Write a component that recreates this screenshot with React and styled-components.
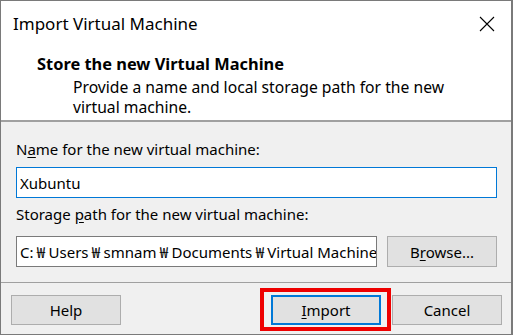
import React from "react";
import styled, { createGlobalStyle } from "styled-components";

const Global = createGlobalStyle`
  html, body { margin: 0; padding: 0; background: #3a3a3a; }
  * { box-sizing: border-box; }
  body { font-family: "Noto Sans", "Open Sans", sans-serif; }
`;

const Window = styled.div`
  width: 513px;
  height: 335px;
  border: 1px solid #7a7a7a;
  border-right-width: 2px;
  background: #f0f0f0;
  display: flex;
  flex-direction: column;
  overflow: hidden;
  color: #000;
`;

const TitleBar = styled.div`
  height: 44px;
  flex: none;
  background: #fff;
  display: flex;
  align-items: center;
  justify-content: space-between;
  padding-left: 12px;
  padding-right: 16px;
`;

const Title = styled.div`
  font-size: 17px;
`;

const CloseIcon = styled.svg`
  width: 16px;
  height: 16px;
  display: block;
  margin-top: 1px;
`;

const Banner = styled.div`
  background: #fff;
  height: 77px;
  flex: none;
  padding: 8px 0 0 36px;
  border-bottom: 2px solid #a0a0a0;
`;

const BannerTitle = styled.div`
  font-weight: 700;
  font-size: 16.4px;
  line-height: 22px;
  margin-bottom: 2px;
`;

const BannerText = styled.div`
  padding-left: 36px;
  font-size: 15.7px;
  line-height: 20px;
  width: 416px;
`;

const Body = styled.div`
  padding: 17px 14px 0 15px;
  display: flex;
  flex-direction: column;
  border-bottom: 1px solid #a0a0a0;
  height: 161px;
  flex: none;
`;

const Label = styled.div`
  font-size: 15px;
  line-height: 20px;
  margin-bottom: ${(p) => p.$mb ?? 8}px;
`;

const U = styled.span`
  text-decoration: underline;
  text-underline-offset: 2px;
`;

const TextInput = styled.input`
  font-family: inherit;
  font-size: 15px;
  height: 31px;
  width: 100%;
  border: 1px solid #0078d7;
  background: #fff;
  padding: 0 3px;
  margin: 0;
  outline: none;
  color: #000;
  flex: none;
`;

const PathField = styled.div`
  flex: 1;
  min-width: 0;
  height: 31px;
  border: 1px solid #7a7a7a;
  background: #fff;
  padding: 0 3px;
  font-size: 15px;
  line-height: 29px;
  white-space: nowrap;
  overflow: hidden;
`;

const Won = styled.span`
  display: inline-block;
  width: 15px;
  text-align: center;
  font-family: "Noto Sans CJK KR", "Noto Sans", sans-serif;
`;

const Row = styled.div`
  display: flex;
  gap: 10px;
  margin-top: 12px;
  align-items: stretch;
`;

const Spacer = styled.div`
  height: ${(p) => p.$h}px;
  flex: none;
`;

const Button = styled.button`
  font-family: inherit;
  font-size: 15px;
  width: 110px;
  height: ${(p) => p.$h || 30}px;
  background: #e1e1e1;
  border: ${(p) => (p.$default ? "2px solid #0078d7" : "1px solid #adadad")};
  color: #000;
  padding: 0;
  margin: 0;
  flex: none;
`;

const Footer = styled.div`
  flex: 1;
  display: flex;
  align-items: flex-start;
  padding: 12px 9px 0 10px;
`;

const Grow = styled.div`
  flex: 1;
`;

const Highlight = styled.div`
  position: relative;
  margin-right: 11px;
  display: flex;
  &::after {
    content: "";
    position: absolute;
    top: -7px;
    bottom: -6px;
    left: -11px;
    right: -10px;
    border: 4px solid #ee0000;
    pointer-events: none;
  }
`;

const path = ["C:", "Users", "smnam", "Documents", "Virtual Machines", "Xubuntu"];

export default function App() {
  return (
    <>
      <Global />
      <Window>
        <TitleBar>
          <Title>Import Virtual Machine</Title>
          <CloseIcon viewBox="0 0 16 16">
            <path d="M1 1 L15 15 M15 1 L1 15" stroke="#000" strokeWidth="1.1" fill="none" />
          </CloseIcon>
        </TitleBar>
        <Banner>
          <BannerTitle>Store the new Virtual Machine</BannerTitle>
          <BannerText>
            Provide a name and local storage path for the new virtual machine.
          </BannerText>
        </Banner>
        <Body>
          <Label>
            N<U>a</U>me for the new virtual machine:
          </Label>
          <TextInput defaultValue="Xubuntu" />
          <Spacer $h={6} />
          <Label $mb={0}>
            Storage <U>p</U>ath for the new virtual machine:
          </Label>
          <Row>
            <PathField>
              {path.map((seg, i) => (
                <React.Fragment key={i}>
                  {i > 0 && <Won>₩</Won>}
                  {seg}
                </React.Fragment>
              ))}
            </PathField>
            <Button $h={31}>
              B<U>r</U>owse...
            </Button>
          </Row>
        </Body>
        <Footer>
          <Button>Help</Button>
          <Grow />
          <Highlight>
            <Button $default>
              <U>I</U>mport
            </Button>
          </Highlight>
          <Button>Cancel</Button>
        </Footer>
      </Window>
    </>
  );
}
